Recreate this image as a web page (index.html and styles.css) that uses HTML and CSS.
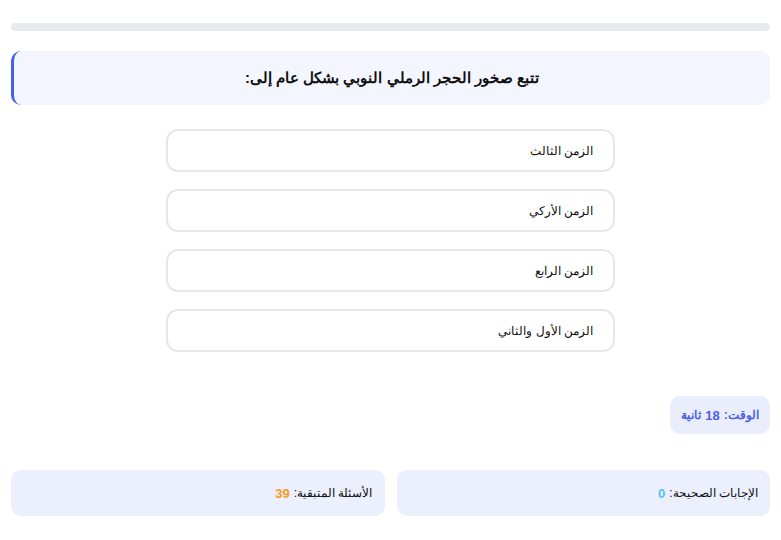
FILE: index.html
```html
<!DOCTYPE html>
<html lang="ar" dir="rtl">

<head>
    <meta charset="utf-8">
    <title>اختبار</title>
    <link rel="stylesheet" href="styles.css">
</head>

<body>
    <main class="quiz">
        <div class="progress"><div class="progress-fill"></div></div>

        <div class="question">
            <h2>تتبع صخور الحجر الرملي النوبي بشكل عام إلى:</h2>
        </div>

        <div class="options">
            <button class="option">الزمن الثالث</button>
            <button class="option">الزمن الأركي</button>
            <button class="option">الزمن الرابع</button>
            <button class="option">الزمن الأول والثاني</button>
        </div>

        <div class="timer">الوقت: <span>18</span> ثانية</div>

        <div class="stats">
            <div class="stat">الإجابات الصحيحة: <b class="correct">0</b></div>
            <div class="stat">الأسئلة المتبقية: <b class="left">39</b></div>
        </div>
    </main>
</body>

</html>
```

FILE: styles.css
```css
body {
    margin: 0;
    padding: 0;
    background: #fff;
    color: #111;
    font-family: Arial, "Liberation Sans", sans-serif;
    font-size: 13px;
}

.quiz {
    padding: 23px 11px;
}

.progress {
    height: 8px;
    border-radius: 4px;
    background: #e8eaee;
    overflow: hidden;
}

.progress-fill {
    width: 0;
    height: 100%;
}

.question {
    margin-top: 20px;
    height: 54px;
    box-sizing: border-box;
    background: #f3f6fe;
    border-left: 3px solid #4361ee;
    border-radius: 10px;
    display: flex;
    align-items: center;
    justify-content: center;
}

.question h2 {
    margin: 0;
    font-size: 15px;
    font-weight: 700;
    color: #111;
}

.options {
    width: 449px;
    margin: 24px auto 0;
    display: flex;
    flex-direction: column;
    gap: 17px;
}

.option {
    height: 43px;
    background: #fff;
    border: 2px solid #e5e7eb;
    border-radius: 12px;
    font-family: inherit;
    font-size: 12px;
    color: #111;
    text-align: right;
    padding: 0 20px;
    cursor: pointer;
}

.timer {
    margin-top: 44px;
    width: 100px;
    height: 38px;
    box-sizing: border-box;
    background: #eaeefc;
    border-radius: 10px;
    color: #4a5ee8;
    font-weight: 700;
    font-size: 12px;
    display: flex;
    align-items: center;
    justify-content: center;
}

.timer span {
    font-size: 13px;
    margin: 0 4px;
}

.stats {
    margin-top: 36px;
    display: grid;
    grid-template-columns: 1fr 1fr;
    gap: 12px;
}

.stat {
    height: 46px;
    background: #eceffc;
    border-radius: 10px;
    display: flex;
    align-items: center;
    padding: 0 12px;
    font-size: 12px;
}

.stat b {
    font-size: 13px;
    margin-right: 4px;
}

.correct {
    color: #4fc3f7;
}

.left {
    color: #f59a23;
}
```
